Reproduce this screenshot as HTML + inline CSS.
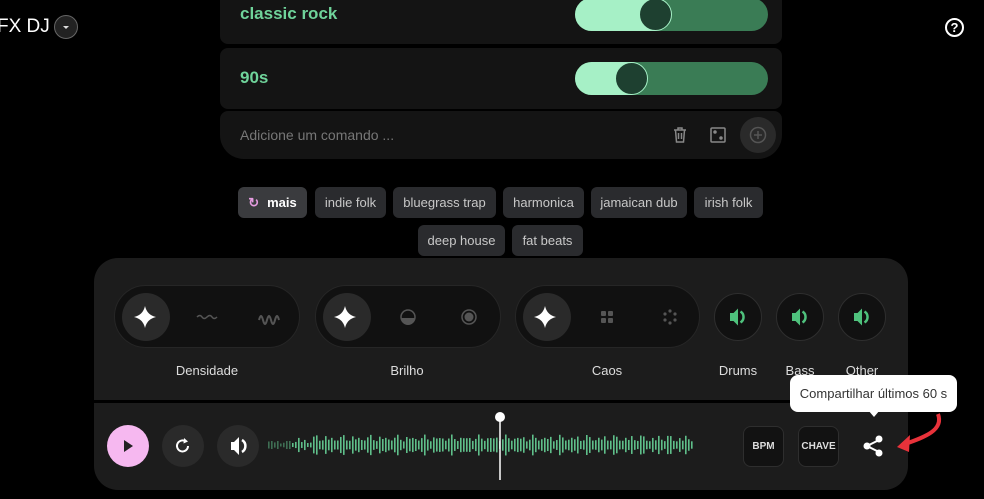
<!DOCTYPE html>
<html><head><meta charset="utf-8"><style>
*{box-sizing:border-box;margin:0;padding:0}
body{width:984px;height:499px;background:#000;position:relative;overflow:hidden;font-family:"Liberation Sans",sans-serif;color:#ddd}
.a{position:absolute}
.card{position:absolute;left:220px;width:562px;background:#141414}
.sl{position:absolute;left:575px;width:193px;height:33px;border-radius:17px;background:#3a7c55;overflow:hidden}
.sl .f{position:absolute;left:0;top:0;bottom:0;background:#a6f0c6}
.sl .k{position:absolute;top:0;width:33px;height:33px;border-radius:50%;background:#1e4030;border:1px solid #a6f0c6}
.gt{position:absolute;left:240px;color:#6fd39a;font-weight:bold;font-size:17px}
.chip{position:absolute;height:31px;line-height:31px;background:#2a2b2e;border-radius:6px;color:#c8c8c8;font-size:13px;text-align:center}
.pill{position:absolute;top:285px;height:63px;border-radius:32px;background:#111;border:1px solid #262626}
.pill .c{position:absolute;left:7px;top:7px;width:48px;height:48px;border-radius:50%;background:#2a2a2a}
.rb{position:absolute;top:293px;width:48px;height:48px;border-radius:50%;background:#111;border:1px solid #2e2e2e}
.lbl{position:absolute;top:363px;font-size:13px;color:#ddd;transform:translateX(-50%)}
.cb{position:absolute;top:425px;width:42px;height:42px;border-radius:50%;background:#2a2a2a}
.sq{position:absolute;top:426px;width:41px;height:41px;border-radius:8px;background:#121212;border:1px solid #2e2e2e;color:#ddd;font-size:10px;font-weight:bold;text-align:center;line-height:39px}
</style></head><body>
<div class="a" style="left:-3px;top:16px;font-size:19px;color:#fff">FX DJ</div>
<div class="a" style="left:54px;top:15px;width:24px;height:24px;border-radius:50%;background:#222;border:1px solid #666"><div class="a" style="left:8px;top:10px;border:3px solid transparent;border-top:3px solid #ddd"></div></div>
<div class="a" style="left:945px;top:18px;width:19px;height:19px;border-radius:50%;border:2px solid #fff;color:#fff;font-size:13px;font-weight:bold;text-align:center;line-height:15px">?</div>

<div class="card" style="top:-10px;height:54px;border-radius:0 0 8px 8px"></div>
<div class="card" style="top:48px;height:61px;border-radius:8px"></div>
<div class="card" style="top:111px;height:48px;border-radius:8px 8px 24px 24px"></div>
<div class="gt" style="top:4px">classic rock</div>
<div class="gt" style="top:68px">90s</div>
<div class="sl" style="top:-2px"><div class="f" style="width:80px"></div><div class="k" style="left:64px"></div></div>
<div class="sl" style="top:62px"><div class="f" style="width:57px"></div><div class="k" style="left:40px"></div></div>
<div class="a" style="left:240px;top:127px;font-size:14px;color:#777">Adicione um comando ...</div>
<svg class="a" style="left:671px;top:126px" width="18" height="18" viewBox="0 0 18 18" fill="none" stroke="#888" stroke-width="1.5"><path d="M3 4h12M7 4V2h4v2M4.5 4l1 12h7l1-12M7.5 7v6M10.5 7v6"/></svg>
<svg class="a" style="left:709px;top:126px" width="18" height="18" viewBox="0 0 18 18" fill="none" stroke="#888" stroke-width="1.5"><rect x="2" y="2" width="14" height="14" rx="1"/><circle cx="6" cy="6" r="1" fill="#888"/><circle cx="12" cy="12" r="1" fill="#888"/></svg>
<div class="a" style="left:740px;top:117px;width:36px;height:36px;border-radius:50%;background:#2a2a2a"></div>
<svg class="a" style="left:749px;top:126px" width="18" height="18" viewBox="0 0 18 18" fill="none" stroke="#555" stroke-width="1.5"><circle cx="9" cy="9" r="7.5"/><path d="M9 5v8M5 9h8"/></svg>

<div class="chip" style="left:238px;top:187px;width:69px;background:#3a3b3e;color:#fff;font-weight:bold"><span style="color:#e59ce0;font-weight:bold;margin-right:8px">↻</span>mais</div>
<div class="chip" style="left:315px;top:187px;width:71px">indie folk</div>
<div class="chip" style="left:393px;top:187px;width:103px">bluegrass trap</div>
<div class="chip" style="left:503px;top:187px;width:81px">harmonica</div>
<div class="chip" style="left:591px;top:187px;width:96px">jamaican dub</div>
<div class="chip" style="left:694px;top:187px;width:69px">irish folk</div>
<div class="chip" style="left:418px;top:225px;width:87px">deep house</div>
<div class="chip" style="left:512px;top:225px;width:71px">fat beats</div>

<div class="a" style="left:94px;top:258px;width:814px;height:232px;border-radius:24px;background:#1c1c1c;overflow:hidden"><div class="a" style="left:0;top:142px;width:814px;height:3px;background:#000"></div></div>

<div class="pill" style="left:114px;width:186px"><div class="c"></div></div>
<div class="pill" style="left:315px;width:186px"><div class="c"></div></div>
<div class="pill" style="left:515px;width:185px"><div class="c"></div></div>
<svg class="a" style="left:0;top:0" width="984" height="499">
<g fill="#fff"><path d="M145 306 Q147 315 156 317 Q147 319 145 328 Q143 319 134 317 Q143 315 145 306Z"/><path d="M345 306 Q347 315 356 317 Q347 319 345 328 Q343 319 334 317 Q343 315 345 306Z"/><path d="M545 306 Q547 315 556 317 Q547 319 545 328 Q543 319 534 317 Q543 315 545 306Z"/></g>
<path d="M197 317q3-3 5 0t5 0t5 0t5 0" stroke="#555" stroke-width="1.5" fill="none"/>
<path d="M259 320q2-8 4 0t4 0t4 0t4 0t4 0" stroke="#555" stroke-width="2" fill="none"/>
<circle cx="408" cy="317" r="7" stroke="#555" stroke-width="1.5" fill="none"/><path d="M401 318h14a7 7 0 0 1-14 0z" fill="#555"/>
<circle cx="469" cy="317" r="7" stroke="#555" stroke-width="1.5" fill="none"/><circle cx="469" cy="317" r="4.5" fill="#555"/>
<g fill="#555"><rect x="601" y="311" width="5" height="5" rx="1"/><rect x="608" y="311" width="5" height="5" rx="1"/><rect x="601" y="318" width="5" height="5" rx="1"/><rect x="608" y="318" width="5" height="5" rx="1"/>
<circle cx="670" cy="311" r="1.6"/><circle cx="665" cy="314" r="1.6"/><circle cx="675" cy="314" r="1.6"/><circle cx="665" cy="320" r="1.6"/><circle cx="675" cy="320" r="1.6"/><circle cx="670" cy="323" r="1.6"/></g>
</svg>
<div class="rb" style="left:714px"></div><div class="rb" style="left:776px"></div><div class="rb" style="left:838px"></div>
<svg class="a" style="left:0;top:0" width="984" height="499" fill="#4fc27d">
<g id="spk"><path d="M730 313h3.5l4.5-4.5v17l-4.5-4.5h-3.5z"/><path d="M740.5 311.5a6.5 6.5 0 0 1 0 11" stroke="#4fc27d" stroke-width="2.5" fill="none"/></g>
<use href="#spk" x="62"/><use href="#spk" x="124"/>
</svg>
<div class="lbl" style="left:207px">Densidade</div>
<div class="lbl" style="left:407px">Brilho</div>
<div class="lbl" style="left:607px">Caos</div>
<div class="lbl" style="left:738px">Drums</div>
<div class="lbl" style="left:800px">Bass</div>
<div class="lbl" style="left:862px">Other</div>

<div class="cb" style="left:107px;background:#f6b8f0"></div>
<div class="cb" style="left:162px"></div>
<div class="cb" style="left:217px"></div>
<svg class="a" style="left:0;top:0" width="984" height="499">
<path d="M124 440v12l9-6z" fill="#222"/>
<path d="M188 446a5.5 5.5 0 1 1-2-4.3" stroke="#fff" stroke-width="2" fill="none"/><path d="M184 438l4 3.5-4.5 2z" fill="#fff"/>
<path d="M231 442h3l5-5v18l-5-5h-3z" fill="#fff"/><path d="M242 440a7 7 0 0 1 0 12" stroke="#fff" stroke-width="2.5" fill="none"/>
<g id="wave" fill="#5fbf8a"></g>
<line x1="500" y1="417" x2="500" y2="480" stroke="#fff" stroke-width="1.5"/><circle cx="500" cy="417" r="5" fill="#fff"/>
<g stroke="#fff" stroke-width="2" fill="#fff"><line x1="867" y1="446" x2="879" y2="440"/><line x1="867" y1="446" x2="879" y2="452"/><circle cx="867" cy="446" r="2.5"/><circle cx="879" cy="439" r="2.5"/><circle cx="879" cy="453" r="2.5"/></g>
<path d="M938 414 C944 430 925 437 905 444" stroke="#e8323a" stroke-width="4" fill="none"/>
<path d="M897 447 L910 435 L909 452Z" fill="#e8323a"/>
</svg>
<div class="sq" style="left:743px">BPM</div>
<div class="sq" style="left:798px">CHAVE</div>
<div class="a" style="left:790px;top:375px;width:167px;height:37px;background:#fff;border-radius:8px;color:#333;font-size:13px;line-height:37px;text-align:center">Compartilhar últimos 60 s</div>
<div class="a" style="left:868px;top:410px;border:6px solid transparent;border-top:7px solid #fff"></div>
<script>
var g=document.getElementById('wave'),s='';
for(var x=268;x<692;x+=3){var t=(x-268)/424;var h=3+Math.abs(Math.sin(x*0.7)*Math.cos(x*0.23))*14+(t>0.1?4:0);if(x<290)h=Math.min(h,8);
s+='<rect x="'+x+'" y="'+(445-h/2)+'" width="1.6" height="'+h+'" opacity="'+(x<290?0.5:1)+'"/>';}
g.innerHTML=s;
</script>
</body></html>
